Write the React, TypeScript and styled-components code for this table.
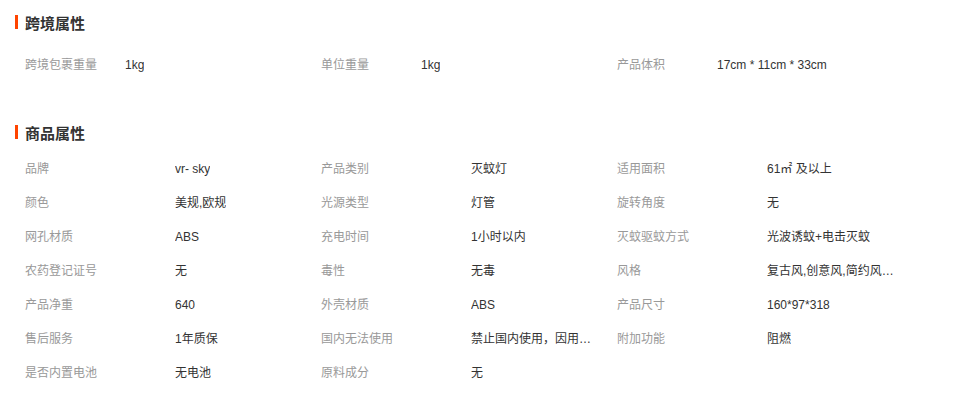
import React from 'react';
import styled, { createGlobalStyle } from 'styled-components';

const GlobalStyle = createGlobalStyle`
  body {
    margin: 0;
    background: #fff;
    font-family: "Liberation Sans", Arial, "Noto Sans CJK SC", sans-serif;
    font-size: 12px;
    color: #333;
  }
`;

const crossAttrs = [
  { label: '跨境包裹重量', value: '1kg' },
  { label: '单位重量', value: '1kg' },
  { label: '产品体积', value: '17cm * 11cm * 33cm' },
];

const productAttrs = [
  { label: '品牌', value: 'vr- sky' },
  { label: '产品类别', value: '灭蚊灯' },
  { label: '适用面积', value: '61㎡ 及以上' },
  { label: '颜色', value: '美规,欧规' },
  { label: '光源类型', value: '灯管' },
  { label: '旋转角度', value: '无' },
  { label: '网孔材质', value: 'ABS' },
  { label: '充电时间', value: '1小时以内' },
  { label: '灭蚊驱蚊方式', value: '光波诱蚊+电击灭蚊' },
  { label: '农药登记证号', value: '无' },
  { label: '毒性', value: '无毒' },
  { label: '风格', value: '复古风,创意风,简约风,现代风' },
  { label: '产品净重', value: '640' },
  { label: '外壳材质', value: 'ABS' },
  { label: '产品尺寸', value: '160*97*318' },
  { label: '售后服务', value: '1年质保' },
  { label: '国内无法使用', value: '禁止国内使用，因用电标准不同' },
  { label: '附加功能', value: '阻燃' },
  { label: '是否内置电池', value: '无电池' },
  { label: '原料成分', value: '无' },
];

const App = () => {
  return (
    <Page>
      <GlobalStyle />
      <Section>
        <Title>跨境属性</Title>
        <AttrGrid gap={16}>
          {crossAttrs.map((a) => (
            <AttrItem key={a.label}>
              <Label width={100}>{a.label}</Label>
              <Value>{a.value}</Value>
            </AttrItem>
          ))}
        </AttrGrid>
      </Section>
      <Section>
        <Title>商品属性</Title>
        <AttrGrid gap={10}>
          {productAttrs.map((a) => (
            <AttrItem key={a.label}>
              <Label width={150}>{a.label}</Label>
              <Value>{a.value}</Value>
            </AttrItem>
          ))}
        </AttrGrid>
      </Section>
    </Page>
  );
};

export default App;

const Page = styled.div`
  width: 955px;
  height: 393px;
  overflow: hidden;
  padding-top: 12px;
  box-sizing: border-box;
`;

const Section = styled.section`
  & + & {
    margin-top: 40px;
  }
`;

const Title = styled.h3`
  display: flex;
  align-items: center;
  margin: 0;
  padding-left: 15px;
  height: 20px;
  font-size: 15px;
  font-weight: bold;
  color: #333;
  font-family: "Noto Sans CJK SC", sans-serif;

  &::before {
    content: '';
    display: block;
    width: 3px;
    height: 14px;
    margin-right: 7px;
    background: #ff4400;
  }
`;

const AttrGrid = styled.div<{ gap: number }>`
  display: grid;
  grid-template-columns: 296px 296px 296px;
  padding-left: 25px;
  margin-top: ${(p) => p.gap}px;
`;

const AttrItem = styled.div`
  display: flex;
  align-items: baseline;
  height: 34px;
  line-height: 34px;
  white-space: nowrap;
`;

const Label = styled.span<{ width: number }>`
  width: ${(p) => p.width}px;
  flex-shrink: 0;
  color: #999;
`;

const Value = styled.span`
  max-width: 128px;
  overflow: hidden;
  text-overflow: ellipsis;
  color: #333;
`;
